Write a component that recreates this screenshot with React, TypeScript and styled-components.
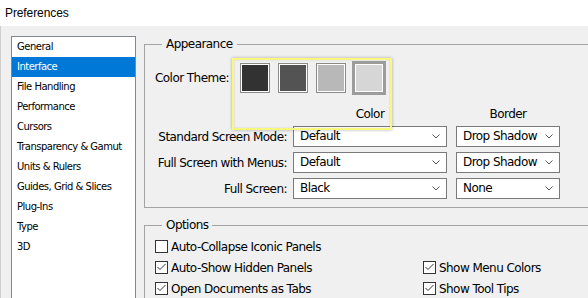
import styled, { createGlobalStyle } from "styled-components";

const GlobalStyle = createGlobalStyle`
  html, body {
    margin: 0;
    padding: 0;
    background: #f0f0f0;
    overflow: hidden;
  }
  body {
    font-family: "DejaVu Sans", Verdana, sans-serif;
    font-size: 12px;
    letter-spacing: -0.55px;
    color: #000;
  }
`;

const Window = styled.div`
  width: 588px;
  height: 298px;
  display: flex;
  flex-direction: column;
  overflow: hidden;
  background: #f0f0f0;
`;

const TitleBar = styled.div`
  height: 26px;
  flex: none;
  background: #fff;
  padding-left: 5px;
  font-family: "Liberation Sans", Arial, sans-serif;
  font-size: 12px;
  letter-spacing: -0.1px;
  line-height: 26px;
`;

const Body = styled.div`
  flex: 1;
  display: flex;
  gap: 8px;
  padding: 10px 0 0 10px;
  border-left: 1px solid #cfcfcf;
  overflow: hidden;
`;

const Sidebar = styled.ul`
  list-style: none;
  margin: 0;
  padding: 0;
  width: 123px;
  flex: none;
  height: 300px;
  background: #fff;
  border: 1px solid #828790;
  font-size: 10px;
  letter-spacing: -0.5px;
`;

const NavItem = styled.li<{ $active?: boolean }>`
  height: 20px;
  line-height: 20px;
  padding-left: 5px;
  white-space: nowrap;
  background: ${(p) => (p.$active ? "#0078d7" : "transparent")};
  color: ${(p) => (p.$active ? "#fff" : "#000")};
`;

const Main = styled.div`
  width: 470px;
  flex: none;
  display: flex;
  flex-direction: column;
  gap: 9px;
`;

const Group = styled.fieldset`
  margin: 0;
  padding: 0;
  border: 1px solid #a3a3a3;
  min-width: 0;
`;

const Legend = styled.legend`
  margin-left: 17px;
  padding: 0 4px;
  line-height: 16px;
`;

const Content = styled.div<{ $bottom: number }>`
  position: relative;
  padding: 0 0 ${(p) => p.$bottom}px 10px;
`;

const ThemeRow = styled.div`
  display: flex;
  align-items: center;
  margin-top: 9px;
  height: 34px;
`;

const ThemeLabel = styled.span`
  width: 83px;
  flex: none;
`;

const Swatches = styled.div`
  display: flex;
  gap: 4px;
`;

const Slot = styled.div`
  width: 34px;
  height: 34px;
  display: flex;
  align-items: center;
  justify-content: center;
`;

const Swatch = styled.div<{ $fill: string; $selected?: boolean }>`
  box-sizing: border-box;
  width: ${(p) => (p.$selected ? 35 : 30)}px;
  height: ${(p) => (p.$selected ? 34 : 30)}px;
  background: ${(p) => p.$fill};
  border: ${(p) => (p.$selected ? "3px solid #9c9c9c" : "1px solid #8a8a8a")};
  box-shadow: inset 0 0 0 1px #fff;
`;

const Highlight = styled.div`
  position: absolute;
  left: 87px;
  top: -3px;
  width: 160px;
  height: 72px;
  box-sizing: border-box;
  border: 2px solid #f8f87c;
  box-shadow: 0 0 3px rgba(0, 0, 0, 0.3), inset 0 0 2px rgba(0, 0, 0, 0.15);
  pointer-events: none;
`;

const ModeGrid = styled.div`
  display: grid;
  grid-template-columns: 132px 154px 107px;
  grid-template-rows: 14px repeat(3, 21px);
  column-gap: 6px;
  row-gap: 5px;
  margin-top: 12px;
  align-items: center;
  & > :nth-child(3n + 3) {
    margin-left: 3px;
  }
`;

const ColHead = styled.span`
  text-align: center;
  line-height: 14px;
`;

const RowLabel = styled.span`
  text-align: right;
  white-space: nowrap;
`;

const SelectBox = styled.div`
  height: 21px;
  box-sizing: border-box;
  border: 1px solid #7a7a7a;
  background: #fff;
  display: flex;
  align-items: center;
  justify-content: space-between;
  padding: 0 6px 0 6px;
  line-height: 19px;
`;

const Chevron = styled.svg`
  width: 8px;
  height: 5px;
  flex: none;
`;

const OptionsGrid = styled.div`
  display: grid;
  grid-template-columns: 268px auto;
  grid-auto-rows: 21px;
  margin-top: 3px;
  align-items: center;
`;

const CheckRow = styled.label`
  display: flex;
  align-items: center;
  gap: 3px;
  white-space: nowrap;
`;

const Box = styled.span`
  width: 13px;
  height: 13px;
  box-sizing: border-box;
  border: 1px solid #333;
  background: #fff;
  display: flex;
  align-items: center;
  justify-content: center;
`;

const Select = ({ value }: { value: string }) => (
  <SelectBox>
    <span>{value}</span>
    <Chevron viewBox="0 0 8 5">
      <path d="M0.5 0.5 L4 4 L7.5 0.5" fill="none" stroke="#555" strokeWidth="1" />
    </Chevron>
  </SelectBox>
);

const Check = ({ label, checked }: { label: string; checked?: boolean }) => (
  <CheckRow>
    <Box>
      {checked && (
        <svg width="11" height="11" viewBox="0 0 11 11">
          <path d="M1.5 5 L4 7.5 L9.5 2" fill="none" stroke="#333" strokeWidth="1" />
        </svg>
      )}
    </Box>
    {label}
  </CheckRow>
);

const sections = [
  "General",
  "Interface",
  "File Handling",
  "Performance",
  "Cursors",
  "Transparency & Gamut",
  "Units & Rulers",
  "Guides, Grid & Slices",
  "Plug-Ins",
  "Type",
  "3D",
];

const themes = ["#323232", "#535353", "#b8b8b8", "#d6d6d6"];

const modes = [
  { label: "Standard Screen Mode:", color: "Default", border: "Drop Shadow" },
  { label: "Full Screen with Menus:", color: "Default", border: "Drop Shadow" },
  { label: "Full Screen:", color: "Black", border: "None" },
];

export default function App() {
  return (
    <>
      <GlobalStyle />
      <Window>
        <TitleBar>Preferences</TitleBar>
        <Body>
          <Sidebar>
            {sections.map((s) => (
              <NavItem key={s} $active={s === "Interface"}>
                {s}
              </NavItem>
            ))}
          </Sidebar>
          <Main>
            <Group>
              <Legend>Appearance</Legend>
              <Content $bottom={8}>
                <ThemeRow>
                  <ThemeLabel>Color Theme:</ThemeLabel>
                  <Swatches>
                    {themes.map((c, i) => (
                      <Slot key={c}>
                        <Swatch $fill={c} $selected={i === 3} />
                      </Slot>
                    ))}
                  </Swatches>
                </ThemeRow>
                <ModeGrid>
                  <span />
                  <ColHead>Color</ColHead>
                  <ColHead>Border</ColHead>
                  {modes.map((m) => [
                    <RowLabel key={m.label}>{m.label}</RowLabel>,
                    <Select key={m.label + "c"} value={m.color} />,
                    <Select key={m.label + "b"} value={m.border} />,
                  ])}
                </ModeGrid>
                <Highlight />
              </Content>
            </Group>
            <Group>
              <Legend>Options</Legend>
              <Content $bottom={20}>
                <OptionsGrid>
                  <Check label="Auto-Collapse Iconic Panels" />
                  <span />
                  <Check label="Auto-Show Hidden Panels" checked />
                  <Check label="Show Menu Colors" checked />
                  <Check label="Open Documents as Tabs" checked />
                  <Check label="Show Tool Tips" checked />
                </OptionsGrid>
              </Content>
            </Group>
          </Main>
        </Body>
      </Window>
    </>
  );
}
